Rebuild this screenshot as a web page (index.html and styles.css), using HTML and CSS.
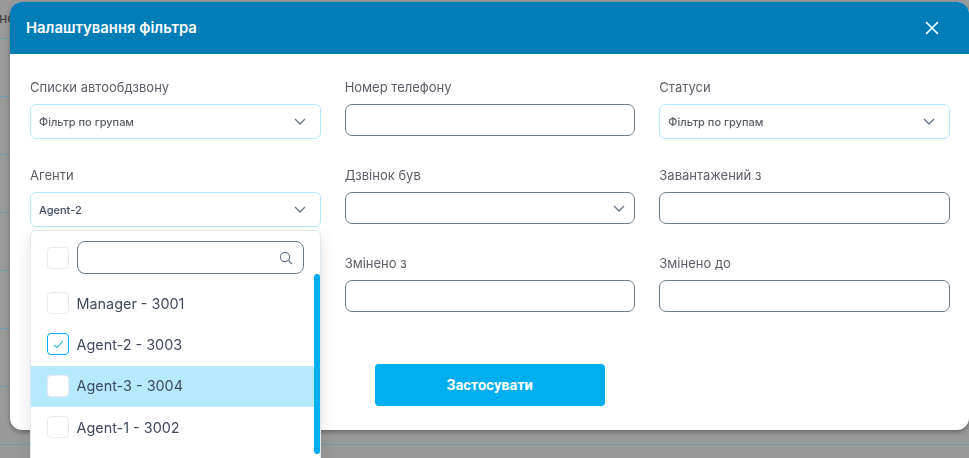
FILE: index.html
```html
<!DOCTYPE html>
<html lang="uk">
<head>
<meta charset="utf-8">
<title>Налаштування фільтра</title>
<link rel="stylesheet" href="styles.css">
</head>
<body>
<div class="backdrop">
  <div class="behind-text">но</div>
  <div class="behind-rows">
    <div class="behind-row"></div><div class="behind-row"></div><div class="behind-row"></div><div class="behind-row"></div>
    <div class="behind-row"></div><div class="behind-row"></div><div class="behind-row"></div><div class="behind-row"></div>
  </div>
</div>
<section class="modal">
  <header class="modal-head">
    <h2 class="modal-title">Налаштування фільтра</h2>
    <svg class="close-icon" viewBox="0 0 14 14" width="14" height="14"><path d="M1 1l12 12M13 1L1 13"/></svg>
  </header>
  <div class="modal-body">
    <div class="form-grid">
      <div class="field">
        <label class="field-label">Списки автообдзвону</label>
        <div class="multi"><span class="multi-text placeholder">Фільтр по групам</span><svg class="chev" viewBox="0 0 12 7" width="12" height="7"><path d="M1 1l5 5 5-5"/></svg></div>
      </div>
      <div class="field">
        <label class="field-label">Номер телефону</label>
        <div class="input"></div>
      </div>
      <div class="field">
        <label class="field-label">Статуси</label>
        <div class="multi"><span class="multi-text placeholder">Фільтр по групам</span><svg class="chev" viewBox="0 0 12 7" width="12" height="7"><path d="M1 1l5 5 5-5"/></svg></div>
      </div>
      <div class="field field-dropdown">
        <label class="field-label">Агенти</label>
        <div class="multi"><span class="multi-text">Agent-2</span><svg class="chev" viewBox="0 0 12 7" width="12" height="7"><path d="M1 1l5 5 5-5"/></svg></div>
        <div class="dropdown">
          <div class="dropdown-search">
            <span class="check"></span>
            <div class="search-box">
              <svg class="search-icon" viewBox="0 0 14 14" width="14" height="14"><circle cx="6" cy="6" r="4.6"/><path d="M9.5 9.5L13 13"/></svg>
            </div>
          </div>
          <ul class="options">
            <li class="option"><span class="check"></span>Manager - 3001</li>
            <li class="option"><span class="check checked"><svg viewBox="0 0 12 10" width="11" height="9"><path d="M1 5.5l3.2 3L11 1"/></svg></span>Agent-2 - 3003</li>
            <li class="option active"><span class="check"></span>Agent-3 - 3004</li>
            <li class="option"><span class="check"></span>Agent-1 - 3002</li>
          </ul>
          <div class="scroll-track"><div class="scroll-thumb"></div></div>
        </div>
      </div>
      <div class="field">
        <label class="field-label">Дзвінок був</label>
        <div class="input input-select"><svg class="chev" viewBox="0 0 12 7" width="12" height="7"><path d="M1 1l5 5 5-5"/></svg></div>
      </div>
      <div class="field">
        <label class="field-label">Завантажений з</label>
        <div class="input"></div>
      </div>
      <div class="field"></div>
      <div class="field">
        <label class="field-label">Змінено з</label>
        <div class="input"></div>
      </div>
      <div class="field">
        <label class="field-label">Змінено до</label>
        <div class="input"></div>
      </div>
      <div class="field"></div>
      <div class="actions"><button class="apply" type="button">Застосувати</button></div>
    </div>
  </div>
</section>
</body>
</html>
```
FILE: styles.css
```css
* { box-sizing: border-box; }
html, body { margin: 0; height: 100%; overflow: hidden; }
body { font-family: Inter, "Noto Sans", sans-serif; background: #999; color: #3f4a5e; }

.backdrop { position: fixed; inset: 0; background: #999; overflow: hidden; }
.behind-text { position: absolute; left: -1px; top: 9px; font-size: 14px; color: #3a3a3a; }
.behind-rows { padding-top: 38px; }
.behind-row { height: 58px; border-top: 1px solid #6f9aae; }

.modal {
  position: absolute; left: 10px; top: 2px; width: 959px; height: 428px;
  background: #fff; border-radius: 12px;
  box-shadow: 0 2px 4px rgba(0, 0, 0, .35);
}
.modal-head {
  height: 52px; padding: 0 30px 0 16px;
  display: flex; align-items: center; justify-content: space-between;
  background: #007cb7; border-radius: 12px 12px 0 0;
}
.modal-title { margin: 0; font-size: 14.85px; font-weight: 600; color: #fff; }
.close-icon { fill: none; stroke: #fff; stroke-width: 1.6; }

.modal-body { padding: 24px 19px 0 20px; }
.form-grid {
  display: grid; grid-template-columns: repeat(3, 1fr);
  column-gap: 24px; grid-auto-rows: 88px;
}
.field { position: relative; }
.field-label { display: block; height: 18px; margin-bottom: 8px; font-size: 13px; line-height: 18px; color: #5a5f67; }

.multi {
  height: 35px; padding: 0 14px 0 8px;
  display: flex; align-items: center; justify-content: space-between;
  border: 1px solid #b5e8fd; border-radius: 6px; background: #fff;
}
.multi-text { font-size: 11px; font-weight: 500; color: #3f4a5e; }
.multi-text.placeholder { color: #5a5f67; }
.chev { fill: none; stroke: #64748b; stroke-width: 1.3; }

.input { height: 32px; border: 1px solid #6b7c87; border-radius: 7px; background: #fff; }
.input-select { display: flex; align-items: center; justify-content: flex-end; padding-right: 9px; }

.dropdown {
  position: absolute; left: 0; right: 0; top: 64px; height: 240px;
  background: #fff; border: 1px solid #e2e8f0; border-radius: 6px;
  box-shadow: 0 6px 16px rgba(15, 23, 42, .12);
  overflow: hidden; z-index: 2;
}
.dropdown-search { display: flex; gap: 8px; padding: 10px 16px 0; height: 52px; align-items: flex-start; }
.dropdown-search .check { margin-top: 6px; }
.search-box {
  flex: 1; height: 33px; display: flex; align-items: center; justify-content: flex-end; padding-right: 10px;
  border: 1px solid #6b7c87; border-radius: 8px;
}
.search-icon { fill: none; stroke: #64748b; stroke-width: 1.1; }
.options { list-style: none; margin: 0; padding: 0; }
.option {
  height: 41.3px; padding: 0 0 1px 16px;
  display: flex; align-items: center; gap: 7.5px;
  font-size: 14.4px; color: #3f4a5e;
}
.option.active { background: #b7e9fe; }
.check {
  flex: none; width: 22px; height: 22px; display: flex; align-items: center; justify-content: center;
  background: #fff; border: 1px solid #e8eaee; border-radius: 4px;
}
.check.checked { border-color: #00aff0; }
.check svg { fill: none; stroke: #3bbcf0; stroke-width: 1.2; }
.scroll-track { position: absolute; top: 0; bottom: 0; right: 0; width: 6px; background: #fff; }
.scroll-thumb { margin-top: 43px; height: 180px; width: 6px; background: #00aff0; border-radius: 3px; }

.actions { grid-column: 2; display: flex; padding-left: 30px; }
.apply {
  width: 230px; height: 42px; border: 0; border-radius: 4px; background: #00aff0;
  color: #fff; font-family: Roboto, sans-serif; font-size: 14.6px; font-weight: 700; margin-top: 22px;
}
```
